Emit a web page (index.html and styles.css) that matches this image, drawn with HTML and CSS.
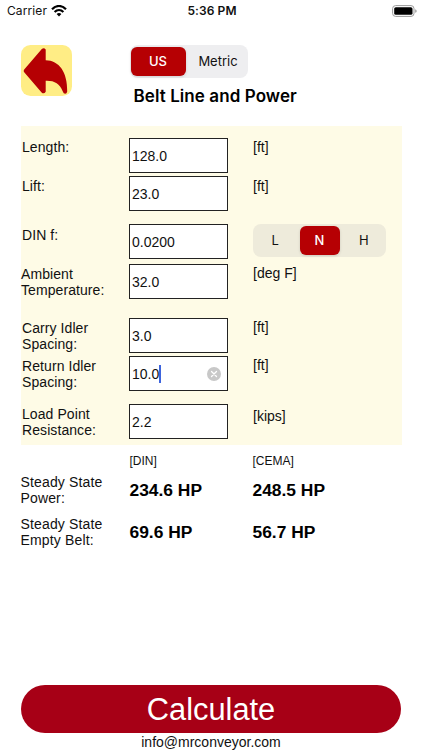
FILE: index.html
```html
<!DOCTYPE html>
<html lang="en">
<head>
<meta charset="utf-8">
<title>Belt Line and Power</title>
<link rel="stylesheet" href="styles.css">
</head>
<body>
<div class="status">
  <div class="carrier"><span>Carrier</span>
    <svg width="16" height="12" viewBox="0 0 16 12"><g fill="none" stroke="#000" stroke-width="2.1"><path d="M1 4.3C5-.2 11-.2 15 4.3"/><path d="M3.6 7C6.2 4.3 9.8 4.3 12.4 7"/></g><path d="M8 11.4 5.6 8.9Q8 7 10.4 8.9Z"/></svg>
  </div>
  <div class="clock">5:36 PM</div>
  <svg class="battery" width="25" height="12" viewBox="0 0 25 12"><rect x=".6" y=".6" width="21.4" height="10.8" rx="3" fill="#fff" stroke="#9a9a9a"/><rect x="2.2" y="2.2" width="18.3" height="7.6" rx="1.6"/><path d="M23.3 4.2Q24.6 4.6 24.6 6T23.3 7.8Z" fill="#888"/></svg>
</div>
<header class="header">
  <svg class="back" width="51" height="51" viewBox="0 0 51 51"><rect width="51" height="51" rx="9.5" fill="#ffed85"/><path d="M3.2 24.4 20.8 3.9Q23 2.2 24.7 4.5V15.3C38 15.5 46.5 27 46.2 46.5Q45.8 48.8 44.2 48.8Q42.5 48.8 41.8 46.5C38.5 38.5 33.5 35.5 24.7 35.8V46.8Q22.8 49.6 20.6 47.4L3.2 27.2Q2 25.8 3.2 24.4Z" fill="#b50003"/></svg>
  <div class="heading">
    <div class="segment units"><span class="on">US</span><span>Metric</span></div>
    <h1>Belt Line and Power</h1>
  </div>
</header>
<main class="panel">
  <div class="row"><label>Length:</label><div class="field">128.0</div><span class="unit">[ft]</span></div>
  <div class="row lift"><label>Lift:</label><div class="field">23.0</div><span class="unit">[ft]</span></div>
  <div class="row din"><label>DIN f:</label><div class="field">0.0200</div><div class="segment level"><span>L</span><span class="on">N</span><span>H</span></div></div>
  <div class="row ambient"><label class="outset">Ambient<br>Temperature:</label><div class="field">32.0</div><span class="unit">[deg F]</span></div>
  <div class="row carry"><label>Carry Idler<br>Spacing:</label><div class="field">3.0</div><span class="unit">[ft]</span></div>
  <div class="row return"><label>Return Idler<br>Spacing:</label><div class="field">10.0<i class="caret"></i>
    <svg class="clear" width="14" height="14" viewBox="0 0 14 14"><circle cx="7" cy="7" r="7" fill="#c8c8c8"/><path d="m4.5 4.5 5 5m0-5-5 5" stroke="#fff" stroke-width="1.3" stroke-linecap="round"/></svg></div><span class="unit">[ft]</span></div>
  <div class="row load"><label>Load Point<br>Resistance:</label><div class="field">2.2</div><span class="unit">[kips]</span></div>
</main>
<section class="results">
  <div class="result columns"><span></span><span>[DIN]</span><span>[CEMA]</span></div>
  <div class="result"><span>Steady State<br>Power:</span><b>234.6 HP</b><b>248.5 HP</b></div>
  <div class="result"><span>Steady State<br>Empty Belt:</span><b>69.6 HP</b><b>56.7 HP</b></div>
</section>
<footer class="footer">
  <div class="calculate">Calculate</div>
  <div class="email">info@mrconveyor.com</div>
</footer>
</body>
</html>
```
FILE: styles.css
```css
* { box-sizing: border-box; }
body {
  margin: 0;
  width: 422px;
  height: 750px;
  overflow: hidden;
  display: flex;
  flex-direction: column;
  background: #fff;
  color: #111;
  font: 14px/16px "Liberation Sans", Arial, sans-serif;
}
.status {
  height: 22px;
  flex: none;
  display: grid;
  grid-template-columns: 1fr 60px 1fr;
  align-items: center;
  padding: 0 5px 0 7px;
  font: 12px/22px Inter, sans-serif;
  letter-spacing: .1px;
}
.carrier { display: flex; align-items: center; gap: 4px; }
.clock { font-weight: 600; white-space: nowrap; text-align: center; letter-spacing: .1px; }
.battery { justify-self: end; margin-top: -1px; }
.header {
  height: 104px;
  flex: none;
  display: grid;
  grid-template-columns: 108.5px 1fr;
  padding: 23px 0 0 21px;
}
.segment {
  display: flex;
  height: 33px;
  padding: 2px;
  border-radius: 8px;
  background: #eeeef0;
  font: 13px/29px Inter, sans-serif;
  text-align: center;
  color: #111;
}
.segment span { flex: 1; }
.segment .on {
  background: #b60003;
  border-radius: 6px;
  color: #fff;
  font-weight: 500;
  box-shadow: 0 1px 3px #0002;
}
.units { width: 118px; padding: 2px 0 2px 1px; }
.units .on { flex: none; width: 55px; }
.units span + span { padding-left: 3px; }
h1 {
  margin: 6px 0 0 4px;
  font: 600 17px/25px Inter, sans-serif;
  letter-spacing: .08px;
  color: #000;
}
.panel {
  width: 381px;
  height: 319px;
  flex: none;
  margin-left: 21px;
  padding-top: 12px;
  background: #fefbe6;
}
.row {
  display: grid;
  grid-template-columns: 108px 99px 1fr;
  height: 35px;
  align-items: start;
}
.row label {
  padding: 1px 0 0 1px;
  letter-spacing: .08px;
}
.row label.outset { padding-left: 0; }
.unit { padding: 1px 0 0 25px; }
.field {
  position: relative;
  display: flex;
  align-items: center;
  height: 35px;
  padding: 0 0 0 2px;
  border: 1px solid #222;
  background: #fff;
}
.lift { margin-top: 3px; }
.lift label, .lift .unit { padding-top: 2px; }
.din { margin-top: 13px; }
.din label { padding-top: 3px; }
.level { width: 133px; margin-left: 25px; background: #eeebdb; }
.level span { flex: 1; }
.level .on { flex: 0 0 40px; }
.level span:first-child { padding-right: 4px; }
.level span:last-child { padding-left: 4px; }
.ambient { margin-top: 5px; }
.carry { margin-top: 19px; }
.return { margin-top: 3px; }
.load { margin-top: 13px; }
.carry label, .return label, .load label, .ambient label { padding-top: 2px; }
.load .unit { padding-top: 4px; }
.caret { width: 2px; height: 18px; background: #3d64dd; }
.clear { margin: 0 6px 0 auto; }
.results { margin-left: 20.5px; padding-top: 8px; }
.result { display: grid; grid-template-columns: 109px 123px 1fr; height: 42px; align-items: start; }
.result span { letter-spacing: .15px; }
.columns { height: 21px; font-size: 12px; }
.columns span { letter-spacing: 0; }
.result b { font-size: 17.4px; line-height: 32px; color: #000; }
.footer { margin-top: auto; text-align: center; }
.calculate {
  width: 380px;
  height: 48px;
  margin: 0 auto;
  border-radius: 24px;
  background: #a70016;
  color: #fff;
  font-size: 30.8px;
  line-height: 50px;
}
.email { height: 17px; line-height: 18px; }
```
